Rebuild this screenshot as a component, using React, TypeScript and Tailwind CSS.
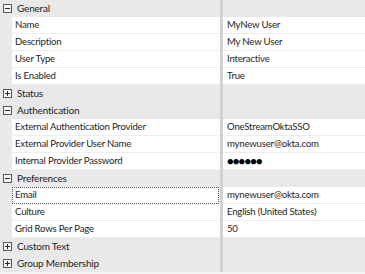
type Row =
  | { kind: 'group'; label: string; open: boolean }
  | { kind: 'prop'; label: string; value: string; focus?: boolean; password?: boolean };

const rows: Row[] = [
  { kind: 'group', label: 'General', open: true },
  { kind: 'prop', label: 'Name', value: 'MyNew User' },
  { kind: 'prop', label: 'Description', value: 'My New User' },
  { kind: 'prop', label: 'User Type', value: 'Interactive' },
  { kind: 'prop', label: 'Is Enabled', value: 'True' },
  { kind: 'group', label: 'Status', open: false },
  { kind: 'group', label: 'Authentication', open: true },
  { kind: 'prop', label: 'External Authentication Provider', value: 'OneStreamOktaSSO' },
  { kind: 'prop', label: 'External Provider User Name', value: 'mynewuser@okta.com' },
  { kind: 'prop', label: 'Internal Provider Password', value: '●●●●●●', password: true },
  { kind: 'group', label: 'Preferences', open: true },
  { kind: 'prop', label: 'Email', value: 'mynewuser@okta.com', focus: true },
  { kind: 'prop', label: 'Culture', value: 'English (United States)' },
  { kind: 'prop', label: 'Grid Rows Per Page', value: '50' },
  { kind: 'group', label: 'Custom Text', open: false },
  { kind: 'group', label: 'Group Membership', open: false },
];

function ToggleIcon({ open }: { open: boolean }) {
  return (
    <svg width="9" height="9" viewBox="0 0 9 9" className="shrink-0">
      <rect x="0.5" y="0.5" width="8" height="8" fill="#f4f4f4" stroke="#5a5a5a" />
      <path d="M2 4.5h5" stroke="#2a2a2a" />
      {!open && <path d="M4.5 2v5" stroke="#2a2a2a" />}
    </svg>
  );
}

export default function App() {
  return (
    <div
      className="w-[365px] h-[274px] bg-[#e9e9e9] text-[9.6px] tracking-[-0.2px] text-[#1e1e1e] overflow-hidden"
      style={{ fontFamily: 'Lato, "Noto Sans", sans-serif' }}
    >
      {rows.map((row, i) =>
        row.kind === 'group' ? (
          <div key={i} className="flex h-[17px]">
            <div className="w-[220px] flex items-center gap-[5px] pl-[3px] text-[10px]">
              <ToggleIcon open={row.open} />
              <span>{row.label}</span>
            </div>
            <div className="w-[3px] bg-[#d2d2d2]" />
            <div className="flex-1" />
          </div>
        ) : (
          <div key={i} className="flex h-[17px]">
            <div className="w-[220px] pl-[12px] flex">
              <div
                className={
                  row.focus
                    ? 'flex-1 bg-white flex items-center pl-[2px] border border-dotted border-[#555] mr-[1px]'
                    : 'flex-1 bg-white flex items-center pl-[3px] border-b border-[#eeeeee]'
                }
              >
                {row.label}
              </div>
            </div>
            <div className="w-[3px] bg-[#d2d2d2]" />
            <div className="flex-1 bg-white flex items-center pl-[4px] border-b border-[#eeeeee]">
              {row.password ? (
                <span className="text-[11px] tracking-[-0.8px] text-black">{row.value}</span>
              ) : (
                row.value
              )}
            </div>
          </div>
        )
      )}
      <div className="h-[2px] bg-[#f4f4f4]" />
    </div>
  );
}
